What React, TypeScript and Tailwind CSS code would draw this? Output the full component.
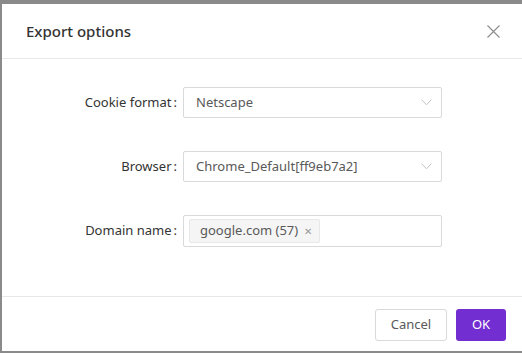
import React from 'react';

const font = { fontFamily: '"Noto Sans", "Open Sans", sans-serif' };

function Chevron() {
  return (
    <svg width="11" height="7" viewBox="0 0 11 7" fill="none">
      <path d="M0.5 0.5L5.5 5.8L10.5 0.5" stroke="#c4c4c4" strokeWidth="1" />
    </svg>
  );
}

function Row({ label, children }: { label: string; children: React.ReactNode }) {
  return (
    <div className="flex items-center">
      <div className="w-[175px] shrink-0 text-right text-[13px] text-[#333]">
        {label}
        <span className="ml-[2px]">:</span>
      </div>
      <div className="ml-[6px] w-[259px]">{children}</div>
    </div>
  );
}

function Select({ value }: { value: string }) {
  return (
    <div className="flex h-[31px] items-center justify-between rounded-[2px] border border-[#d9d9d9] bg-white pl-[12px] pr-[9px]">
      <span className="text-[13px] text-[#595959]">{value}</span>
      <Chevron />
    </div>
  );
}

export default function App() {
  return (
    <div className="h-[353px] w-[522px] overflow-hidden bg-[#8a8a8a] pl-[2px] pt-[4px]" style={font}>
      <div className="flex h-[347px] w-[520px] flex-col bg-white">
        {/* Header */}
        <div className="flex h-[55px] items-center justify-between border-b border-[#e8e8e8] pl-[24px] pr-[22px]">
          <span className="text-[15px] font-medium text-[#333]">Export options</span>
          <svg width="13" height="13" viewBox="0 0 13 13" fill="none">
            <path d="M0.5 0.5L12.5 12.5M12.5 0.5L0.5 12.5" stroke="#8c8c8c" strokeWidth="1.1" />
          </svg>
        </div>

        {/* Body */}
        <div className="flex flex-1 flex-col gap-[33px] pt-[28px]">
          <Row label="Cookie format">
            <Select value="Netscape" />
          </Row>
          <Row label="Browser">
            <Select value="Chrome_Default[ff9eb7a2]" />
          </Row>
          <Row label="Domain name">
            <div className="flex h-[32px] items-center rounded-[2px] border border-[#d9d9d9] bg-white pl-[5px]">
              <div className="flex h-[24px] items-center rounded-[2px] border border-[#e8e8e8] bg-[#f5f5f5] pl-[10px] pr-[7px]">
                <span className="text-[13px] text-[#595959]">google.com (57)</span>
                <span className="ml-[6px] text-[10px] leading-none text-[#999]">✕</span>
              </div>
            </div>
          </Row>
        </div>

        {/* Footer */}
        <div className="flex justify-end gap-[9px] border-t border-[#e8e8e8] pb-[10px] pr-[16px] pt-[12px]">
          <button className="h-[32px] w-[72px] rounded-[3px] border border-[#d9d9d9] bg-white text-[13px] text-[#595959]">
            Cancel
          </button>
          <button className="h-[32px] w-[50px] rounded-[3px] bg-[#722ed1] text-[13px] text-white">OK</button>
        </div>
      </div>
    </div>
  );
}
